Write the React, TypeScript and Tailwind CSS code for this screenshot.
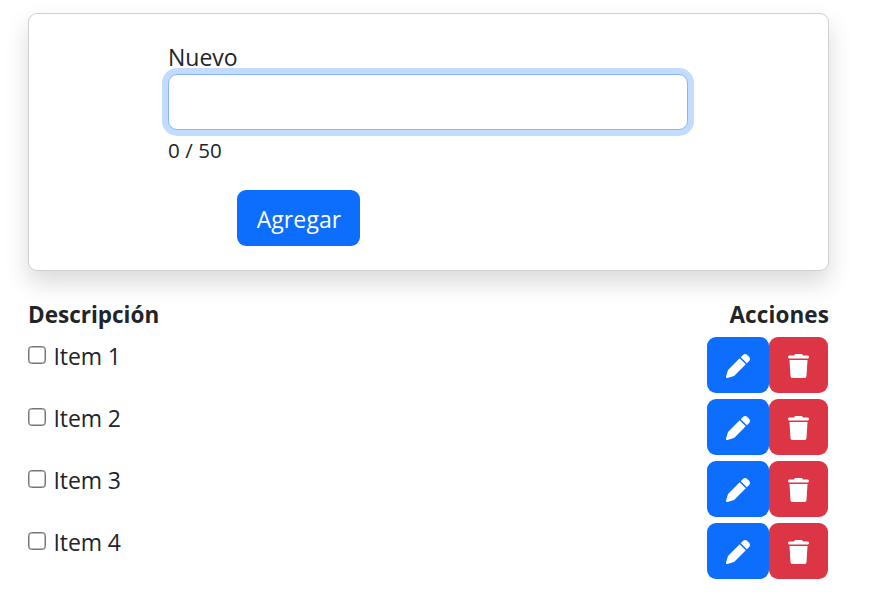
import { useState } from "react";
import { FaTrash } from "react-icons/fa6";

const items = ["Item 1", "Item 2", "Item 3", "Item 4"];

function PenIcon() {
  return (
    <svg viewBox="0 0 512 512" className="h-6 w-6" fill="currentColor" aria-hidden="true">
      <path d="M362.7 19.32C387.7-5.678 428.3-5.678 453.3 19.32L492.7 58.75C517.7 83.74 517.7 124.3 492.7 149.3L444.3 197.7L314.3 67.72L362.7 19.32zM421.7 220.3L188.5 453.4C178.1 463.8 165.2 471.5 151.1 475.6L30.77 511C22.35 513.5 13.24 511.2 7.03 504.1C.82 498.8-1.502 489.7 .976 481.2L36.37 360.9C40.53 346.8 48.16 333.9 58.57 323.5L291.7 90.34L421.7 220.3z" />
    </svg>
  );
}

function Row({ label }: { label: string }) {
  return (
    <li className="flex h-14 items-start justify-between">
      <label className="flex items-start">
        <input
          type="checkbox"
          className="mt-[9px] size-[18px] appearance-none rounded-[3.5px] border border-[#767676] bg-white shadow-[inset_0_0_0_0.5px_#767676]"
        />
        <span className="ml-[7.5px] pt-px text-[23px] leading-9 tracking-[-0.1px]">{label}</span>
      </label>
      <div className="flex">
        <button className="flex h-14 w-[62px] items-center justify-center rounded-[9px] bg-[#0d6efd] pt-0.5 text-white">
          <PenIcon />
        </button>
        <button className="flex h-14 w-[59px] items-center justify-center rounded-[9px] bg-[#dc3545] pt-0.5 text-white">
          <FaTrash className="h-6 w-[21px]" />
        </button>
      </div>
    </li>
  );
}

export default function App() {
  const [text, setText] = useState("");
  return (
    <main className="h-[603px] overflow-hidden bg-white pt-[13px] pr-[45px] pl-7 font-['Open_Sans','Noto_Sans',sans-serif] text-[#212529]">
      <section className="h-[258px] rounded-[9px] border border-[#d0d0d0] bg-white pt-[25px] pl-[139px] shadow-[0_12px_24px_rgba(0,0,0,0.15)]">
        <label className="block h-[35px] w-fit text-[23px] leading-9">Nuevo</label>
        <input
          value={text}
          maxLength={50}
          onChange={(e) => setText(e.target.value)}
          className="block h-14 w-[520px] rounded-[9px] border border-[#86b7fe] bg-white px-[18px] text-[23px] shadow-[0_0_0_6px_#c2dbff] outline-none"
        />
        <p className="mt-[5px] w-fit text-[20.5px] leading-[31px] tracking-[0.1px]">{text.length} / 50</p>
        <button className="mt-6 ml-[69px] flex h-14 w-[123px] items-center justify-center rounded-[9px] bg-[#0d6efd] pt-0.5 text-[23px] tracking-[0.1px] text-white">
          <span className="pl-px">Agregar</span>
        </button>
      </section>
      <header className="mt-[26px] flex h-10 justify-between text-[22.5px] leading-9 font-bold">
        <span>Descripción</span>
        <span className="tracking-[0.1px]">Acciones</span>
      </header>
      <ul className="flex flex-col gap-1.5 pr-px">
        {items.map((item) => (
          <Row key={item} label={item} />
        ))}
      </ul>
    </main>
  );
}
